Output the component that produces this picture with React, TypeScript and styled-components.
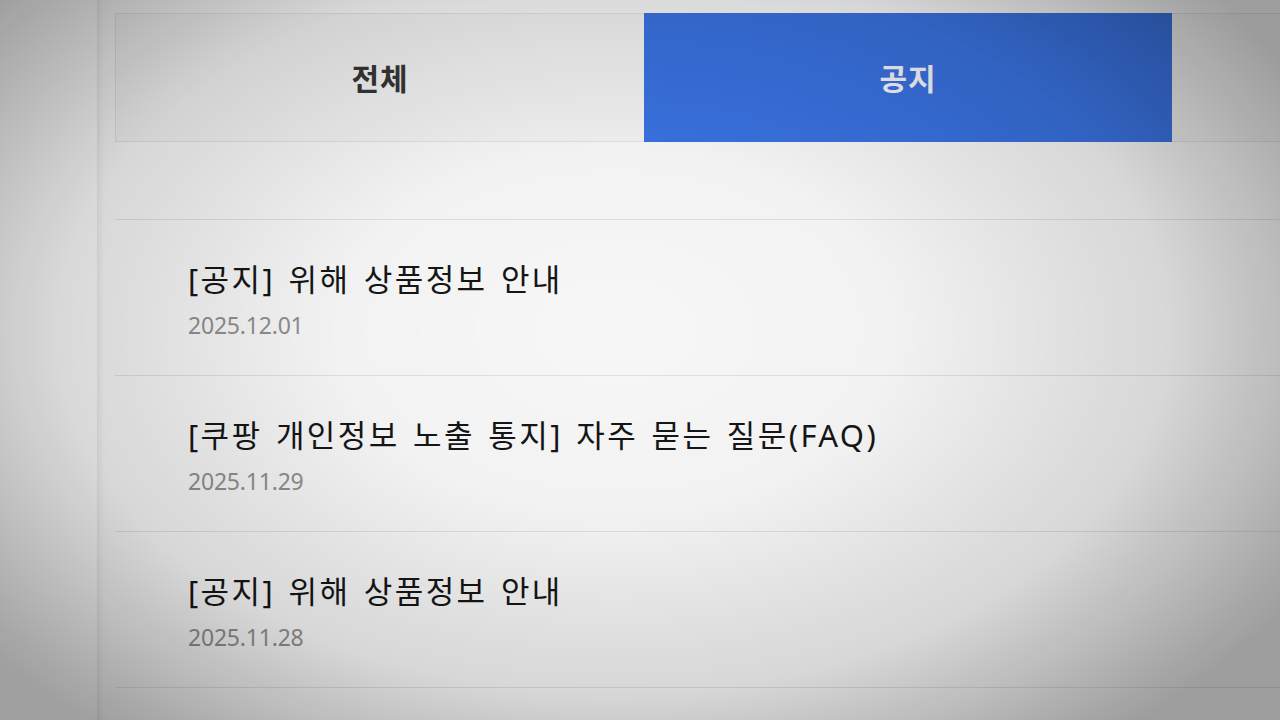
import React from "react";
import styled, { createGlobalStyle } from "styled-components";

const Global = createGlobalStyle`
  html, body { margin: 0; padding: 0; }
  body {
    width: 1280px;
    height: 720px;
    overflow: hidden;
    background: #fbfbfb;
    font-family: "Noto Sans", "Noto Sans CJK KR", sans-serif;
  }
`;

const Page = styled.div`
  width: 1280px;
  height: 720px;
  display: flex;
  overflow: hidden;
`;

const Gutter = styled.div`
  width: 97px;
  flex: none;
  background: #fafafa;
`;

const Panel = styled.main`
  flex: 1;
  background: #f7f7f7;
  padding: 13px 0 0 18px;
  box-shadow: inset 6px 0 8px -6px rgba(0, 0, 0, 0.12);
  overflow: hidden;
`;

const TabBar = styled.div`
  display: grid;
  grid-template-columns: 529px 528px 528px;
  width: 1585px;
  height: 129px;
  border-top: 1px solid #e2e2e2;
  border-bottom: 1px solid #e2e2e2;
  box-sizing: border-box;
`;

const Tab = styled.div<{ $active?: boolean; $first?: boolean }>`
  display: flex;
  align-items: center;
  justify-content: center;
  font-family: "Noto Sans CJK KR", sans-serif;
  font-weight: 700;
  font-size: 30px;
  letter-spacing: 1px;
  color: ${(p) => (p.$active ? "#f2f4fa" : "#363636")};
  background: ${(p) => (p.$active ? "#3a72e0" : "#f2f2f2")};
  border-left: ${(p) => (p.$first ? "1px solid #e2e2e2" : "none")};
  margin: ${(p) => (p.$active ? "-1px 0" : "0")};
  padding-bottom: 2px;
`;

const List = styled.ul`
  list-style: none;
  margin: 77px 0 0 0;
  padding: 0;
  border-top: 1px solid #e0e0e0;
`;

const Row = styled.li`
  height: 156px;
  box-sizing: border-box;
  border-bottom: 1px solid #e0e0e0;
  padding: 35px 0 0 73px;
  display: flex;
  flex-direction: column;
`;

const Title = styled.div`
  font-family: "Noto Sans", "Noto Sans CJK KR", sans-serif;
  font-size: 31px;
  line-height: 48px;
  color: #161616;
  letter-spacing: 2.4px;
  word-spacing: 3px;
`;

const DateText = styled.div`
  font-family: "Noto Sans", sans-serif;
  font-size: 23px;
  line-height: 30px;
  margin-top: 7px;
  color: #909090;
  letter-spacing: -0.2px;
`;

const Vignette = styled.div`
  position: fixed;
  inset: 0;
  pointer-events: none;
  background: radial-gradient(
    ellipse 62% 72% at 48% 46%,
    rgba(0, 0, 0, 0) 0%,
    rgba(0, 0, 0, 0.02) 35%,
    rgba(0, 0, 0, 0.13) 70%,
    rgba(0, 0, 0, 0.36) 100%
  );
`;

const items = [
  { title: "[공지] 위해 상품정보 안내", date: "2025.12.01" },
  { title: "[쿠팡 개인정보 노출 통지] 자주 묻는 질문(FAQ)", date: "2025.11.29" },
  { title: "[공지] 위해 상품정보 안내", date: "2025.11.28" },
];

export default function App() {
  return (
    <>
      <Global />
      <Page>
        <Gutter />
        <Panel>
          <TabBar>
            <Tab $first>전체</Tab>
            <Tab $active>공지</Tab>
            <Tab />
          </TabBar>
          <List>
            {items.map((it, i) => (
              <Row key={i}>
                <Title>{it.title}</Title>
                <DateText>{it.date}</DateText>
              </Row>
            ))}
          </List>
        </Panel>
      </Page>
      <Vignette />
    </>
  );
}
